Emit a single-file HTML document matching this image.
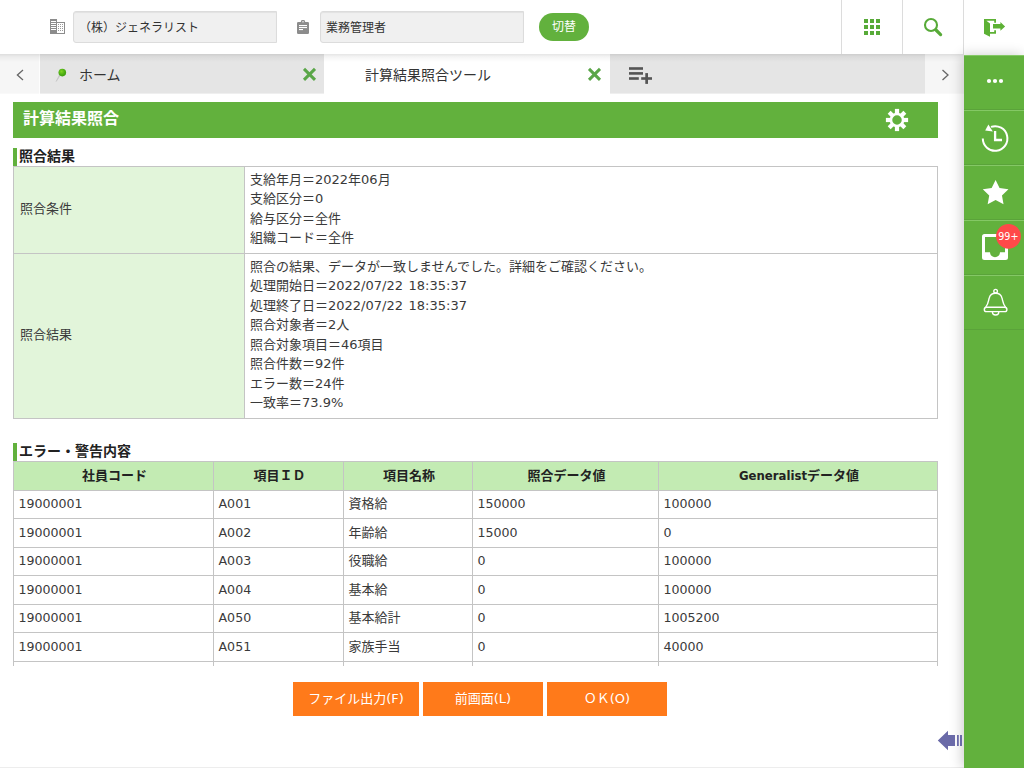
<!DOCTYPE html>
<html lang="ja">
<head>
<meta charset="utf-8">
<title>計算結果照合ツール</title>
<style>
*{box-sizing:border-box;}
html,body{margin:0;padding:0;}
body{width:1024px;height:768px;overflow:hidden;background:#fff;position:relative;
  font-family:"DejaVu Sans","Noto Sans CJK JP",sans-serif;font-size:12px;color:#333;}
.abs{position:absolute;}
/* header */
#hdr{position:absolute;left:0;top:0;width:1024px;height:54px;background:#fff;z-index:5;}
#hdr .inp{position:absolute;top:11px;height:32px;width:204px;background:#f0f0f0;border:1px solid #dcdcdc;border-radius:3px 0 0 3px;
  box-shadow:inset 0 1px 1px rgba(0,0,0,.06);font-size:12px;line-height:32px;padding-left:5px;color:#333;white-space:nowrap;
  font-family:"Liberation Sans","Noto Sans CJK JP",sans-serif;}
#sw{position:absolute;left:539px;top:13px;width:50px;height:28px;border-radius:14px;background:#62b13d;color:#fff;font-size:12px;line-height:29px;text-align:center;
  font-family:"Liberation Sans","Noto Sans CJK JP",sans-serif;}
.vsep{position:absolute;top:0;width:1px;height:54px;background:#dcdcdc;}
/* tab bar */
#tabs{position:absolute;left:0;top:54px;width:964px;height:40px;background:#e5e5e5;z-index:3;}
#tabs .arrow{position:absolute;top:0;width:40px;height:40px;background:#f6f6f6;}
#tabs .tab{position:absolute;top:0;height:40px;font-size:14px;line-height:42px;color:#333;white-space:nowrap;
  font-family:"Liberation Sans","Noto Sans CJK JP",sans-serif;}
#tabshadow{position:absolute;left:0;top:54px;width:964px;height:8px;z-index:6;
  background:linear-gradient(to bottom,rgba(0,0,0,.10),rgba(0,0,0,.045) 35%,rgba(0,0,0,0));}
/* sidebar */
#side{position:absolute;left:964px;top:55px;width:60px;height:713px;background:#62b13d;z-index:7;
  box-shadow:-2px 0 12px rgba(0,0,0,.2);}
#side .item{position:absolute;left:0;width:60px;height:55px;border-top:1px solid #84c865;border-bottom:1px solid #5aa33a;}
/* content */
#title{position:absolute;left:13px;top:102px;width:925px;height:36px;background:#62b13d;color:#fff;font-weight:bold;font-size:16px;line-height:33px;padding-left:10px;
  font-family:"DejaVu Sans","Noto Sans CJK JP",sans-serif;}
.sec{position:absolute;left:13px;height:18px;border-left:4px solid #62b13d;padding-left:2px;font-weight:bold;font-size:14px;line-height:17px;color:#222;white-space:nowrap;}
table{border-collapse:collapse;position:absolute;table-layout:fixed;}
td,th{border:1px solid #c4c4c4;padding:0 0 0 5px;font-size:13px;color:#3a3a3a;text-align:left;font-weight:normal;vertical-align:middle;white-space:nowrap;overflow:hidden;}
#t1 td.l{background:#e2f5da;padding:0 0 6px 6px;}
#t1 td.v{line-height:19.5px;padding-bottom:2.5px;word-spacing:1.5px;}
#t2 th{background:#c3ebb3;font-weight:bold;text-align:center;font-size:13px;padding:0 0 3px 2px;color:#222;}
#t2 th b{font-family:"DejaVu Sans Condensed","DejaVu Sans",sans-serif;}
#t2 td{padding:0 0 4px 4.5px;}
#t2 td.n{font-size:12.6px;padding:0 0 2px 4.5px;}
.btn{position:absolute;top:682px;height:34px;background:#ff7a1a;color:#fff;font-size:13px;line-height:33px;text-align:center;white-space:nowrap;}
</style>
</head>
<body>
<!-- ===== header ===== -->
<div id="hdr">
  <svg class="abs" style="left:50px;top:19px" width="15" height="15" viewBox="0 0 15 15" shape-rendering="crispEdges">
    <rect x="0" y="0" width="7" height="15" fill="#8c8c8c"/>
    <rect x="1" y="2" width="5" height="1" fill="#fff"/><rect x="1" y="4" width="5" height="1" fill="#fff"/><rect x="1" y="6" width="5" height="1" fill="#fff"/><rect x="1" y="8" width="5" height="1" fill="#fff"/><rect x="1" y="10" width="5" height="1" fill="#fff"/>
    <rect x="7" y="3" width="8" height="12" fill="#8c8c8c"/><rect x="7" y="4" width="7" height="10" fill="#fff"/>
    <g fill="#9a9a9a"><rect x="8" y="5" width="1" height="1"/><rect x="10" y="5" width="1" height="1"/><rect x="12" y="5" width="1" height="1"/>
    <rect x="8" y="7" width="1" height="1"/><rect x="10" y="7" width="1" height="1"/><rect x="12" y="7" width="1" height="1"/>
    <rect x="8" y="9" width="1" height="1"/><rect x="10" y="9" width="1" height="1"/><rect x="12" y="9" width="1" height="1"/>
    <rect x="8" y="11" width="1" height="1"/><rect x="10" y="11" width="1" height="1"/><rect x="12" y="11" width="1" height="1"/></g>
  </svg>
  <div class="inp" style="left:73px">（株）ジェネラリスト</div>
  <svg class="abs" style="left:297px;top:20px" width="12" height="14" viewBox="0 0 12 14">
    <path d="M1.2 2h2.6a2.2 2.2 0 0 1 4.4 0h2.6a1.2 1.2 0 0 1 1.2 1.2v9.6a1.2 1.2 0 0 1-1.2 1.2h-9.6a1.2 1.2 0 0 1-1.2-1.2v-9.6a1.2 1.2 0 0 1 1.2-1.2z" fill="#8c8c8c"/>
    <rect x="5.4" y="1.1" width="1.2" height="1.3" fill="#fff"/>
    <rect x="2" y="5" width="8" height="1.1" fill="#fff"/><rect x="2" y="7" width="8" height="1.1" fill="#fff"/><rect x="2" y="9" width="4" height="1.1" fill="#fff"/>
  </svg>
  <div class="inp" style="left:320px">業務管理者</div>
  <div id="sw">切替</div>
  <svg class="abs" style="left:864px;top:19px" width="16" height="16" viewBox="0 0 16 16" shape-rendering="crispEdges" fill="#57aa38">
    <rect x="0" y="0" width="4" height="4"/><rect x="6" y="0" width="4" height="4"/><rect x="12" y="0" width="4" height="4"/>
    <rect x="0" y="6" width="4" height="4"/><rect x="6" y="6" width="4" height="4"/><rect x="12" y="6" width="4" height="4"/>
    <rect x="0" y="12" width="4" height="4"/><rect x="6" y="12" width="4" height="4"/><rect x="12" y="12" width="4" height="4"/>
  </svg>
  <svg class="abs" style="left:922px;top:16px" width="22" height="22" viewBox="0 0 22 22">
    <circle cx="9" cy="9" r="6" fill="none" stroke="#57aa38" stroke-width="2.1"/>
    <path d="M14 14 L18.6 18.6" stroke="#57aa38" stroke-width="3.2" stroke-linecap="round"/>
  </svg>
  <svg class="abs" style="left:982px;top:17px" width="26" height="22" viewBox="0 0 26 22" fill="#5db135">
    <path d="M2 2h12v3.7h-1.8v-1.9h-7.8l3.6 2.6v8.5h4.2v-1.7h1.8v3.5h-6v3.1l-6-3.1z"/>
    <path d="M11 7.1h7.4v-2.1l4.7 4.4-4.7 4.4v-2.2h-7.4z"/>
  </svg>
  <div class="vsep" style="left:841px"></div>
  <div class="vsep" style="left:902px"></div>
  <div class="vsep" style="left:963px"></div>
</div>
<div id="tabshadow"></div>
<!-- ===== tab bar ===== -->
<div id="tabs">
  <div class="arrow" style="left:0;border-right:1px solid #fdfdfd"><svg class="abs" style="left:14px;top:13.5px" width="12" height="14" viewBox="0 0 12 14"><path d="M9 2 L3.4 7 L9 12" fill="none" stroke="#666" stroke-width="1.3"/></svg></div>
  <div class="tab" style="left:40px;width:284px;">
    <svg class="abs" style="left:14px;top:12px" width="16" height="18" viewBox="0 0 16 18">
      <defs><radialGradient id="pg" cx="0.4" cy="0.35" r="0.7"><stop offset="0" stop-color="#7ed321"/><stop offset="0.6" stop-color="#4cad14"/><stop offset="1" stop-color="#3a9a0c"/></radialGradient></defs>
      <path d="M7 8 L2.2 15.4 L5.2 9.6 Z" fill="#c6c6c6" stroke="#c6c6c6" stroke-width="0.8"/>
      <circle cx="8.3" cy="6.6" r="3.8" fill="url(#pg)"/>
    </svg>
    <span class="abs" style="left:39px">ホーム</span>
    <svg class="abs" style="left:262px;top:12.8px" width="15" height="15" viewBox="0 0 15 15"><path d="M2 1.9 L13 12.9 M13 1.9 L2 12.9" stroke="#5aa648" stroke-width="3"/></svg>
  </div>
  <div class="tab" style="left:324px;width:286px;background:#fff;"><span class="abs" style="left:41px">計算結果照合ツール</span>
    <svg class="abs" style="left:263px;top:12.8px" width="15" height="15" viewBox="0 0 15 15"><path d="M2 1.9 L13 12.9 M13 1.9 L2 12.9" stroke="#5aa648" stroke-width="3"/></svg>
  </div>
  <svg class="abs" style="left:629px;top:13px" width="24" height="18" viewBox="0 0 24 18" fill="#555">
    <rect x="0" y="0.2" width="14" height="2.6"/><rect x="0" y="5.1" width="14" height="2.6"/><rect x="0" y="10.2" width="9.8" height="2.6"/>
    <rect x="12.2" y="10.2" width="10.8" height="2.6"/><rect x="16.3" y="6.1" width="2.7" height="10.8"/>
  </svg>
  <div class="arrow" style="left:925px;width:39px"><svg class="abs" style="left:16px;top:14px" width="10" height="14" viewBox="0 0 10 14"><path d="M1.5 2 L7 7 L1.5 12" fill="none" stroke="#666" stroke-width="1.3"/></svg></div>
</div>
<div class="abs" style="left:0;top:93px;width:964px;height:1px;background:rgba(255,255,255,.4);z-index:4"></div>
<!-- ===== sidebar ===== -->
<div id="side">
  <div class="item" style="top:0"><svg class="abs" style="left:0;top:-1px" width="60" height="55"><circle cx="25" cy="26" r="2.1" fill="#fff"/><circle cx="31" cy="26" r="2.1" fill="#fff"/><circle cx="37" cy="26" r="2.1" fill="#fff"/></svg></div>
  <div class="item" style="top:55px"><svg class="abs" style="left:0;top:-1px" width="60" height="55">
    <path d="M18.8 28.5 A12.3 12.3 0 1 0 27 16.9" fill="none" stroke="#fff" stroke-width="2"/>
    <path d="M21.2 20.6 L24.4 14.6 L28.8 21.6 Z" fill="#fff"/>
    <path d="M31.1 21 V30 H38" fill="none" stroke="#fff" stroke-width="2.3"/>
  </svg></div>
  <div class="item" style="top:110px"><svg class="abs" style="left:0;top:-1px" width="60" height="55"><polygon points="31.60,14.90 35.54,22.98 44.44,24.23 37.97,30.47 39.54,39.32 31.60,35.10 23.66,39.32 25.23,30.47 18.76,24.23 27.66,22.98" fill="#fff"/></svg></div>
  <div class="item" style="top:165px"><svg class="abs" style="left:0;top:-1px" width="60" height="55">
    <path fill-rule="evenodd" fill="#fff" d="M20.5 14h21a2.5 2.5 0 0 1 2.5 2.5v21a2.5 2.5 0 0 1-2.5 2.5h-21a2.5 2.5 0 0 1-2.5-2.5v-21a2.5 2.5 0 0 1 2.5-2.5z M21 17v15.3h5a5 5 0 0 0 10 0h5v-15.3z"/>
    <circle cx="44.5" cy="16.3" r="12.4" fill="#ff4949"/>
    <text x="44.3" y="20.2" text-anchor="middle" font-family="DejaVu Sans, sans-serif" font-size="9.6" fill="#fff">99+</text>
  </svg></div>
  <div class="item" style="top:220px"><svg class="abs" style="left:0;top:-1px" width="60" height="55" fill="none" stroke="#fff" stroke-width="1.4">
    <circle cx="31.6" cy="16.2" r="1.8"/>
    <path d="M21.6 32.4 C24.6 28.5 24.4 25.5 25.2 23 C26.3 19 28.8 18.3 31.6 18.3 C34.4 18.3 36.9 19 38 23 C38.8 25.5 38.6 28.5 41.6 32.4"/>
    <rect x="20.3" y="32.2" width="22.6" height="4.4" rx="2.2"/>
    <path d="M28.4 36.8 a3.2 3.2 0 0 0 6.4 0"/>
  </svg></div>
</div>
<!-- ===== content ===== -->
<div id="title">計算結果照合</div>
<svg class="abs" style="left:884px;top:107px;z-index:2" width="26" height="26" viewBox="0 0 26 26" fill="#fff"><rect x="10.90" y="1.90" width="4.20" height="5.70" transform="rotate(0 13 13)"/><rect x="10.90" y="1.90" width="4.20" height="5.70" transform="rotate(45 13 13)"/><rect x="10.90" y="1.90" width="4.20" height="5.70" transform="rotate(90 13 13)"/><rect x="10.90" y="1.90" width="4.20" height="5.70" transform="rotate(135 13 13)"/><rect x="10.90" y="1.90" width="4.20" height="5.70" transform="rotate(180 13 13)"/><rect x="10.90" y="1.90" width="4.20" height="5.70" transform="rotate(225 13 13)"/><rect x="10.90" y="1.90" width="4.20" height="5.70" transform="rotate(270 13 13)"/><rect x="10.90" y="1.90" width="4.20" height="5.70" transform="rotate(315 13 13)"/><circle cx="13" cy="13" r="6.05" fill="none" stroke="#fff" stroke-width="2.6"/></svg>
<svg class="abs" style="left:936px;top:729px;z-index:8" width="28" height="23" viewBox="0 0 28 23" fill="#6a6aa8"><path d="M1.8 11.4 L12 1.7 V6 H19 V17 H12 V21.2 Z"/><rect x="21" y="6" width="1.8" height="11"/><rect x="24" y="6" width="2" height="11"/></svg>
<div class="abs" style="left:0;top:767px;width:964px;height:1px;background:#ededed"></div>
<div class="sec" style="top:148px">照合結果</div>
<table id="t1" style="left:13px;top:166px;width:925px;">
  <colgroup><col style="width:231px"><col></colgroup>
  <tr style="height:87px"><td class="l">照合条件</td><td class="v">支給年月＝2022年06月<br>支給区分＝0<br>給与区分＝全件<br>組織コード＝全件</td></tr>
  <tr style="height:165px"><td class="l">照合結果</td><td class="v">照合の結果、データが一致しませんでした。詳細をご確認ください。<br>処理開始日＝2022/07/22 18:35:37<br>処理終了日＝2022/07/22 18:35:37<br>照合対象者＝2人<br>照合対象項目＝46項目<br>照合件数＝92件<br>エラー数＝24件<br>一致率＝73.9%</td></tr>
</table>
<div class="sec" style="top:443px">エラー・警告内容</div>
<div class="abs" style="left:13px;top:461px;width:926px;height:205px;overflow:hidden;">
<table id="t2" style="left:0;top:0;width:925px;">
  <colgroup><col style="width:200px"><col style="width:130px"><col style="width:129px"><col style="width:186px"><col></colgroup>
  <tr style="height:28.75px"><th>社員コード</th><th>項目ＩＤ</th><th>項目名称</th><th>照合データ値</th><th><b>Generalist</b>データ値</th></tr>
  <tr style="height:28.5px"><td class="n">19000001</td><td class="n">A001</td><td>資格給</td><td class="n">150000</td><td class="n">100000</td></tr>
  <tr style="height:28.5px"><td class="n">19000001</td><td class="n">A002</td><td>年齢給</td><td class="n">15000</td><td class="n">0</td></tr>
  <tr style="height:28.5px"><td class="n">19000001</td><td class="n">A003</td><td>役職給</td><td class="n">0</td><td class="n">100000</td></tr>
  <tr style="height:28.5px"><td class="n">19000001</td><td class="n">A004</td><td>基本給</td><td class="n">0</td><td class="n">100000</td></tr>
  <tr style="height:28.5px"><td class="n">19000001</td><td class="n">A050</td><td>基本給計</td><td class="n">0</td><td class="n">1005200</td></tr>
  <tr style="height:28.5px"><td class="n">19000001</td><td class="n">A051</td><td>家族手当</td><td class="n">0</td><td class="n">40000</td></tr>
  <tr style="height:28.5px"><td>&nbsp;</td><td></td><td></td><td></td><td></td></tr>
</table>
</div>
<div class="btn" style="left:293px;width:126px;">ファイル出力(F)</div>
<div class="btn" style="left:423px;width:120px;">前画面(L)</div>
<div class="btn" style="left:547px;width:120px;">ＯＫ(O)</div>
</body>
</html>
